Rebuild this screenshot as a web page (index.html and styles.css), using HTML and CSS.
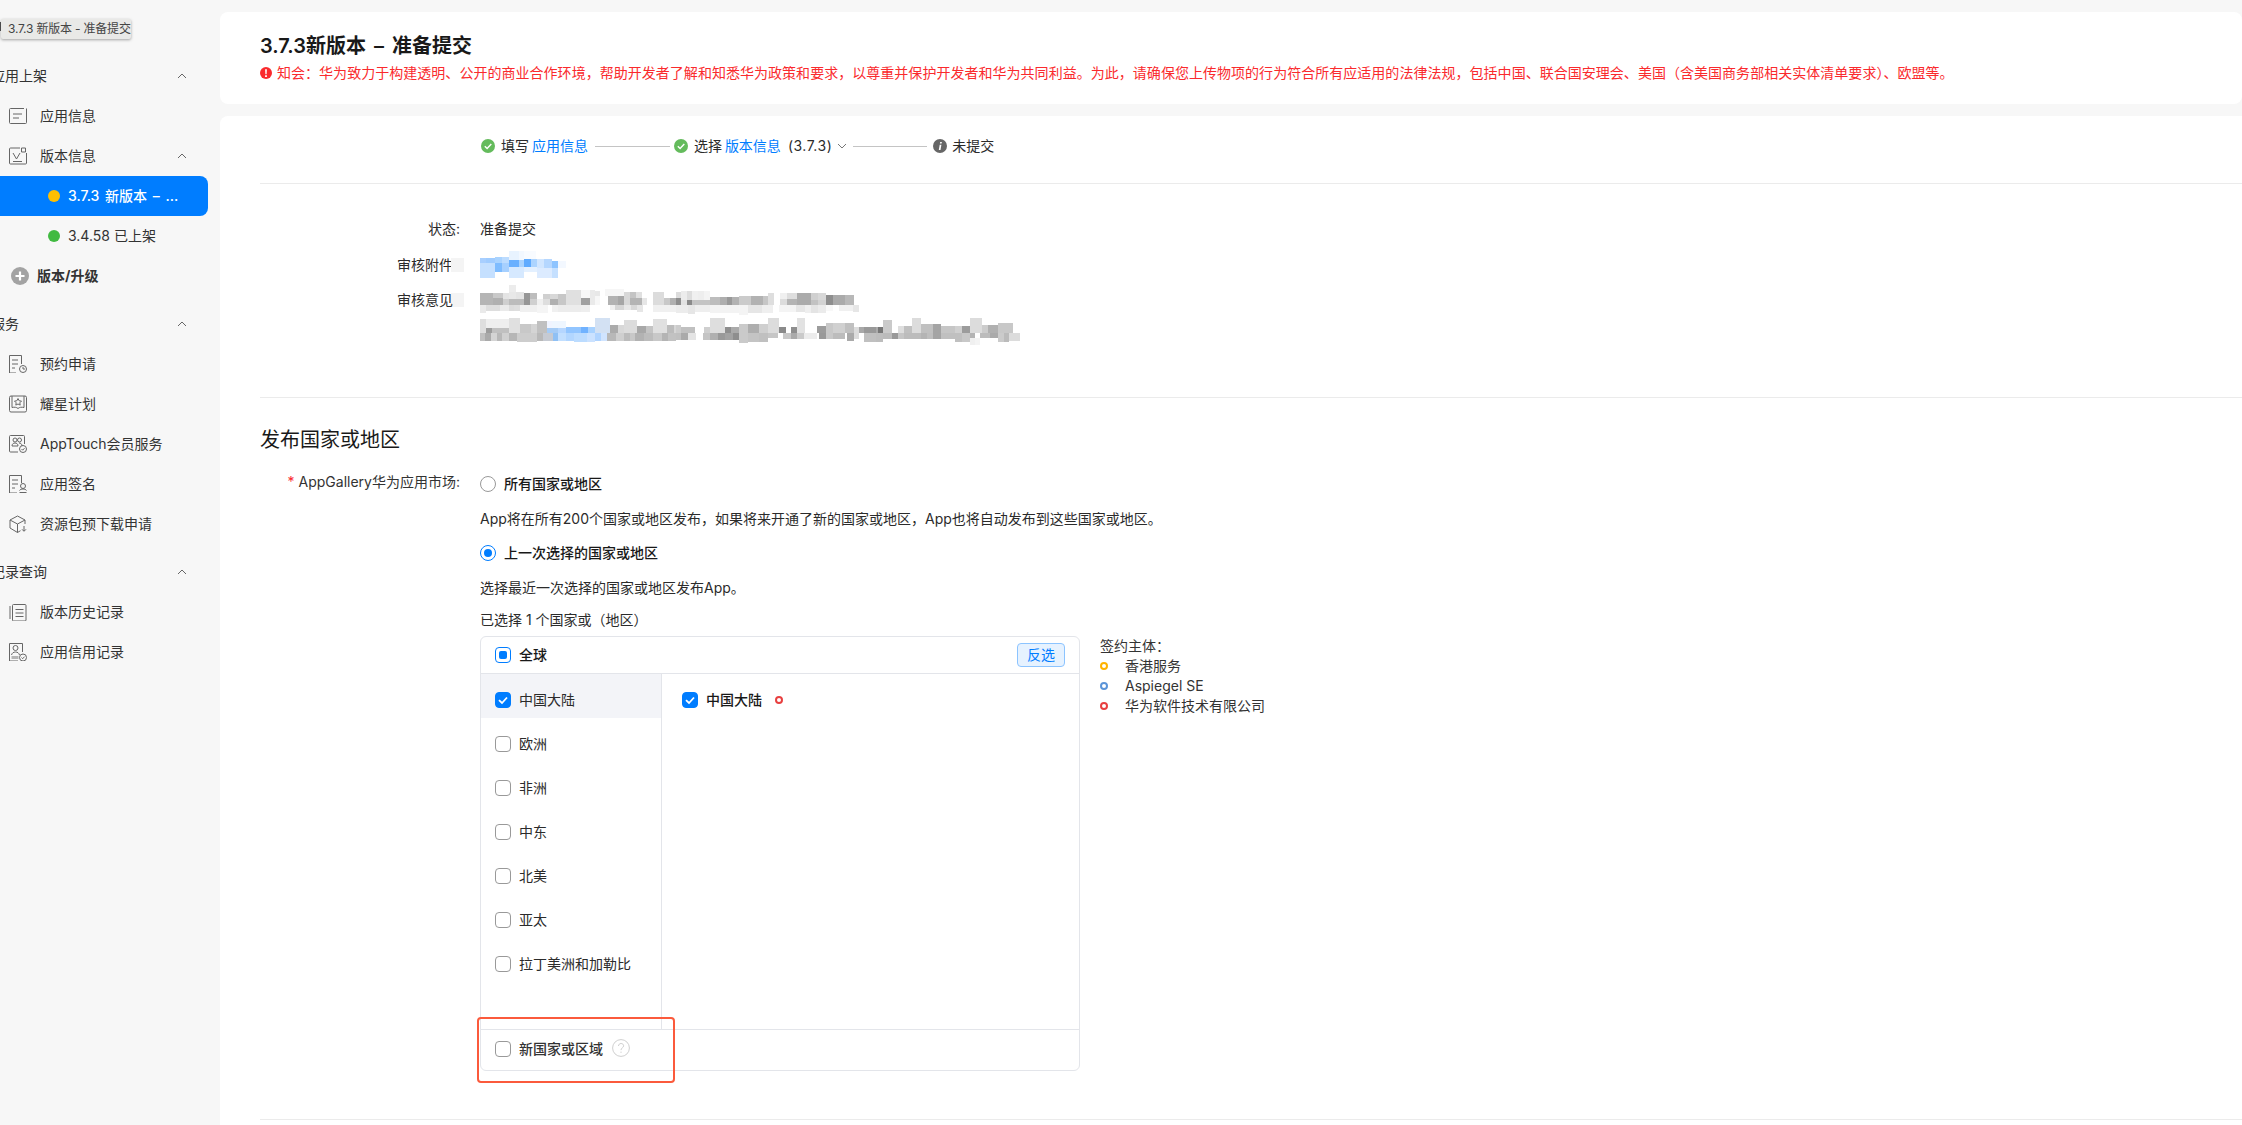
FILE: index.html
```html
<!DOCTYPE html>
<html lang="zh-CN">
<head>
<meta charset="utf-8">
<title>3.7.3新版本 – 准备提交</title>
<link rel="stylesheet" href="styles.css">
</head>
<body>
<aside class="sidebar">
  <div class="tip-mark"></div>
  <div class="tooltip">3.7.3 新版本 - 准备提交</div>
  <nav class="nav">
    <section class="nav-section">
      <div class="nav-head"><span>应用上架</span><svg class="chev" viewBox="0 0 10 6"><path d="M1 5l4-4 4 4"/></svg></div>
      <div class="nav-item"><svg class="ico" viewBox="0 0 18 18"><path d="M15 1.5H1.5a1 1 0 0 0-1 1v13a1 1 0 0 0 1 1h15a1 1 0 0 0 1-1V1.5"/><path d="M4 7h9M4 11h6"/></svg><span>应用信息</span></div>
      <div class="nav-item nav-parent"><svg class="ico" viewBox="0 0 18 18"><path d="M11 1H1.5a1 1 0 0 0-1 1v14a1 1 0 0 0 1 1h15a1 1 0 0 0 1-1V6"/><path d="M12.5 1h4v4h-4z"/><path d="M4 6l3.5 6L11 6M4 14.5h9"/></svg><span>版本信息</span><svg class="chev" viewBox="0 0 10 6"><path d="M1 5l4-4 4 4"/></svg></div>
      <div class="nav-sub nav-active"><i class="dot dot-amber"></i><span>3.7.3 新版本 – ...</span></div>
      <div class="nav-sub"><i class="dot dot-green"></i><span>3.4.58 已上架</span></div>
      <div class="nav-add"><svg class="plus" viewBox="0 0 18 18"><circle cx="9" cy="9" r="9"/><path d="M9 4.5v9M4.5 9h9"/></svg><span>版本/升级</span></div>
    </section>
    <section class="nav-section">
      <div class="nav-head"><span>服务</span><svg class="chev" viewBox="0 0 10 6"><path d="M1 5l4-4 4 4"/></svg></div>
      <div class="nav-item"><svg class="ico" viewBox="0 0 18 18"><path d="M7 18H.5V.5h12V9"/><path d="M3 5h6M3 9h6M3 13h3"/><circle cx="14" cy="14" r="3.5"/><path d="M14 12v2h2"/></svg><span>预约申请</span></div>
      <div class="nav-item"><svg class="ico" viewBox="0 0 18 18"><rect x=".5" y="1" width="17" height="16" rx="1.5"/><path d="M3 1v11.5c2.5-.6 4.500-.3 6 1 1.500-1.300 3.500-1.600 6-1V1"/><path d="M9 3.500l1.200 2.300 2.300.3-1.700 1.700.4 2.300L9 9l-2.200 1.100.4-2.300-1.700-1.700 2.300-.3z"/></svg><span>耀星计划</span></div>
      <div class="nav-item"><svg class="ico" viewBox="0 0 18 18"><path d="M9 17H1.500a1 1 0 0 1-1-1V1.500a1 1 0 0 1 1-1h13a1 1 0 0 1 1 1V9"/><circle cx="6" cy="5" r="2"/><circle cx="10.500" cy="5" r="2"/><path d="M3 11c0-2 1.300-3 3-3s3 1 3 3zM10 8c1.700 0 3 1 3 3"/><circle cx="14" cy="14" r="3.500"/><path d="M12.500 14l1.200 1.200 1.800-2"/></svg><span>AppTouch会员服务</span></div>
      <div class="nav-item"><svg class="ico" viewBox="0 0 18 18"><path d="M8 18H.5V.5h12V8"/><path d="M3 5h6M3 9h6M3 13h3"/><circle cx="14" cy="11" r="2.500"/><path d="M10.500 15.500c.5-1 2-1.500 3.500-1.500s3 .5 3.500 1.500M10.500 17.500h7"/></svg><span>应用签名</span></div>
      <div class="nav-item"><svg class="ico" viewBox="0 0 18 18"><path d="M8.500 1L1 5v8l7.500 4.500 3-1.800M8.500 1L16 5v4M1 5l7.500 4L16 5M8.500 9v8.500"/><path d="M15 11v5M13 14.300l2 2 2-2"/></svg><span>资源包预下载申请</span></div>
    </section>
    <section class="nav-section">
      <div class="nav-head"><span>记录查询</span><svg class="chev" viewBox="0 0 10 6"><path d="M1 5l4-4 4 4"/></svg></div>
      <div class="nav-item"><svg class="ico" viewBox="0 0 18 18"><path d="M1 3v13"/><path d="M3.500 2.500a1 1 0 0 1 1-1H16a1 1 0 0 1 1 1V17a1 1 0 0 1-1 1H4.500a1 1 0 0 1-1-1z"/><path d="M6.500 6.500h8M6.500 10h8M6.500 13.500h8"/></svg><span>版本历史记录</span></div>
      <div class="nav-item"><svg class="ico" viewBox="0 0 18 18"><path d="M9 18H.500V.500h13V9"/><circle cx="6.500" cy="5" r="2.500"/><path d="M2.500 12c.5-2 2-3 4-3s3.500 1 4 3"/><path class="ico-fill" d="M2.500 13h7v3h-7z"/><circle cx="14" cy="14.500" r="3.500"/><path d="M12.500 14.500l1.200 1.200 1.800-2"/></svg><span>应用信用记录</span></div>
    </section>
  </nav>
</aside>

<main class="main">
  <header class="card card-head">
    <h1 class="page-title">3.7.3新版本 – 准备提交</h1>
    <p class="notice"><svg class="notice-ico" viewBox="0 0 12 12"><circle cx="6" cy="6" r="6"/><path d="M5.100 2.200h1.800l-.3 5H5.400zM5.100 8.200h1.800V10H5.100z"/></svg><span>知会：华为致力于构建透明、公开的商业合作环境，帮助开发者了解和知悉华为政策和要求，以尊重并保护开发者和华为共同利益。为此，请确保您上传物项的行为符合所有应适用的法律法规，包括中国、联合国安理会、美国（含美国商务部相关实体清单要求）、欧盟等。</span></p>
  </header>

  <div class="card card-body">
    <div class="steps">
      <div class="step"><svg class="step-ico" viewBox="0 0 14 14"><circle class="ok" cx="7" cy="7" r="7"/><path class="tick" d="M3.800 7.200l2.300 2.300 4.200-4.500"/></svg><span class="step-text">填写 <a class="link">应用信息</a></span></div>
      <i class="step-line"></i>
      <div class="step"><svg class="step-ico" viewBox="0 0 14 14"><circle class="ok" cx="7" cy="7" r="7"/><path class="tick" d="M3.800 7.200l2.300 2.300 4.200-4.500"/></svg><span class="step-text">选择 <a class="link">版本信息</a></span><span class="step-ver">(3.7.3)</span><svg class="step-chev" viewBox="0 0 10 6"><path d="M1 1l4 4 4-4"/></svg></div>
      <i class="step-line step-line-b"></i>
      <div class="step step-last"><svg class="step-ico" viewBox="0 0 14 14"><circle class="pending" cx="7" cy="7" r="7"/><path class="info" d="M7.200 3h1.700l-.3 1.600H6.900zM6.700 5.800h1.700L7.500 11H5.800z"/></svg><span>未提交</span></div>
    </div>
    <hr class="rule rule-a">

    <div class="details">
      <div class="d-label">状态:</div>
      <div class="d-value">准备提交</div>
      <div class="d-label d-blur">审核附件</div>
      <svg class="mosaic" viewBox="12 0 1650 300" shape-rendering="crispEdges">
        <g fill="#f4f4f4"><rect x="-75" y="24" width="40" height="42"/><rect x="-75" y="130" width="40" height="42"/></g>
        <rect x="100" y="3" width="30" height="27" fill="#e8f3ff"/><rect x="130" y="3" width="15" height="27" fill="#f2f8ff"/><rect x="145" y="3" width="35" height="24" fill="#f8fbff"/>
        <rect x="12" y="24" width="18" height="16" fill="#a8cfff"/><rect x="30" y="24" width="27" height="16" fill="#a0ccff"/><rect x="57" y="21" width="21" height="18" fill="#a9d3ff"/><rect x="78" y="21" width="22" height="18" fill="#bcdcff"/><rect x="100" y="30" width="30" height="21" fill="#69b0ff"/><rect x="130" y="30" width="15" height="21" fill="#a9d3ff"/><rect x="145" y="27" width="20" height="24" fill="#5fabff"/><rect x="165" y="27" width="18" height="24" fill="#acd4ff"/><rect x="183" y="27" width="22" height="27" fill="#d1e6ff"/><rect x="205" y="27" width="23" height="27" fill="#b5d7ff"/><rect x="228" y="33" width="18" height="21" fill="#8ec4ff"/><rect x="246" y="33" width="24" height="21" fill="#f3f8ff"/>
        <rect x="12" y="39" width="45" height="45" fill="#c5e0ff"/><rect x="57" y="39" width="21" height="27" fill="#7ebcff"/><rect x="78" y="39" width="22" height="27" fill="#a6d0ff"/><rect x="100" y="51" width="45" height="33" fill="#d6e9ff"/><rect x="145" y="51" width="38" height="15" fill="#e3f0ff"/><rect x="183" y="54" width="45" height="30" fill="#dcebff"/><rect x="228" y="54" width="18" height="30" fill="#c5e0ff"/>

        <rect x="100" y="105" width="20" height="25" fill="#ececec"/>
        <rect x="12" y="129" width="38" height="36" fill="#b5b5b5"/><rect x="50" y="129" width="30" height="16" fill="#c9c9c9"/><rect x="50" y="145" width="30" height="20" fill="#b0b0b0"/><rect x="80" y="129" width="20" height="18" fill="#e4e4e4"/><rect x="80" y="147" width="20" height="18" fill="#cfcfcf"/><rect x="100" y="125" width="20" height="22" fill="#e8e8e8"/><rect x="100" y="147" width="43" height="18" fill="#bcbcbc"/><rect x="120" y="125" width="23" height="22" fill="#e4e4e4"/><rect x="143" y="129" width="19" height="36" fill="#969696"/><rect x="162" y="129" width="21" height="18" fill="#bdbdbd"/><rect x="162" y="147" width="21" height="18" fill="#d0d0d0"/><rect x="183" y="147" width="17" height="18" fill="#f0f0f0"/><rect x="200" y="132" width="22" height="15" fill="#d0d0d0"/><rect x="200" y="147" width="22" height="18" fill="#dedede"/><rect x="222" y="132" width="24" height="15" fill="#d8d8d8"/><rect x="222" y="147" width="24" height="18" fill="#b0b0b0"/><rect x="246" y="132" width="24" height="33" fill="#c7c7c7"/><rect x="270" y="120" width="45" height="45" fill="#e0e0e0"/><rect x="315" y="120" width="27" height="23" fill="#f8f8f8"/><rect x="315" y="143" width="27" height="22" fill="#a0a0a0"/><rect x="342" y="120" width="15" height="45" fill="#eaeaea"/><rect x="357" y="123" width="15" height="15" fill="#e8e8e8"/><rect x="357" y="138" width="15" height="27" fill="#f7f7f7"/><rect x="387" y="117" width="57" height="21" fill="#f6f6f6"/><rect x="396" y="138" width="30" height="27" fill="#b2b2b2"/><rect x="426" y="138" width="18" height="27" fill="#a6a6a6"/><rect x="444" y="126" width="18" height="39" fill="#d8d8d8"/><rect x="462" y="126" width="18" height="18" fill="#c4c4c4"/><rect x="462" y="144" width="36" height="21" fill="#b4b4b4"/><rect x="480" y="126" width="18" height="18" fill="#e0e0e0"/><rect x="498" y="144" width="15" height="21" fill="#e6e6e6"/><rect x="531" y="126" width="33" height="39" fill="#dcdcdc"/><rect x="564" y="144" width="18" height="21" fill="#c8c8c8"/><rect x="582" y="144" width="18" height="21" fill="#b0b0b0"/>
        <g transform="translate(0 165)"><rect x="12" width="18" height="25" fill="#eaeaea"/><rect x="30" width="42" height="17" fill="#dedede"/><rect x="72" width="28" height="17" fill="#eaeaea"/><rect x="100" width="14" height="17" fill="#dcdcdc"/><rect x="114" width="18" height="17" fill="#dedede"/><rect x="132" width="51" height="20" fill="#f0f0f0"/><rect x="183" width="32" height="25" fill="#f5f5f5"/><rect x="228" width="18" height="20" fill="#f0f0f0"/><rect x="246" width="69" height="20" fill="#ececec"/><rect x="315" width="27" height="22" fill="#eeeeee"/><rect x="402" width="15" height="15" fill="#f0f0f0"/><rect x="417" width="27" height="15" fill="#d6d6d6"/><rect x="444" width="21" height="15" fill="#e8e8e8"/><rect x="465" width="18" height="15" fill="#d8d8d8"/><rect x="483" width="18" height="22" fill="#e6e6e6"/><rect x="531" width="69" height="22" fill="#f0f0f0"/></g>

        <rect x="12" y="207" width="18" height="43" fill="#dedede"/><rect x="30" y="207" width="70" height="27" fill="#eeeeee"/><rect x="30" y="234" width="18" height="15" fill="#9c9c9c"/><rect x="48" y="234" width="52" height="15" fill="#c0c0c0"/><rect x="100" y="204" width="32" height="45" fill="#e0e0e0"/><rect x="132" y="222" width="33" height="27" fill="#c8c8c8"/><rect x="165" y="222" width="18" height="27" fill="#d4d4d4"/><rect x="183" y="213" width="30" height="36" fill="#c0c0c0"/><rect x="213" y="213" width="15" height="21" fill="#f0f4ff"/><rect x="228" y="213" width="42" height="21" fill="#eef6ff"/><rect x="213" y="234" width="33" height="15" fill="#a5cbf5"/><rect x="246" y="234" width="24" height="15" fill="#b5d6ff"/><rect x="270" y="231" width="45" height="18" fill="#92c5ff"/><rect x="315" y="231" width="21" height="18" fill="#70b2ff"/><rect x="336" y="231" width="21" height="18" fill="#a8d2ff"/><rect x="357" y="204" width="45" height="45" fill="#d3e1f3"/><rect x="402" y="225" width="24" height="24" fill="#ababab"/><rect x="426" y="225" width="18" height="24" fill="#d8d8d8"/><rect x="444" y="210" width="39" height="39" fill="#dcdcdc"/><rect x="483" y="228" width="27" height="21" fill="#a8a8a8"/><rect x="510" y="228" width="21" height="21" fill="#c4c4c4"/><rect x="531" y="207" width="42" height="42" fill="#e0e0e0"/><rect x="573" y="225" width="21" height="24" fill="#bcbcbc"/><rect x="594" y="225" width="6" height="24" fill="#d6d6d6"/>
        <g transform="translate(0 249)"><rect x="12" width="15" height="23" fill="#c0c0c0"/><rect x="27" width="18" height="23" fill="#aaaaaa"/><rect x="45" width="18" height="23" fill="#d4d4d4"/><rect x="63" width="15" height="23" fill="#b8b8b8"/><rect x="78" width="22" height="23" fill="#d0d0d0"/><rect x="100" width="23" height="23" fill="#b6b6b6"/><rect x="123" width="60" height="28" fill="#cdcdcd"/><rect x="183" width="18" height="23" fill="#b8b8b8"/><rect x="201" width="30" height="23" fill="#c6cad2"/><rect x="231" width="15" height="23" fill="#8fc0f4"/><rect x="246" width="24" height="23" fill="#c2dfff"/><rect x="270" width="24" height="25" fill="#b2d6ff"/><rect x="294" width="39" height="28" fill="#bcdcff"/><rect x="333" width="24" height="28" fill="#cbe2ff"/><rect x="357" width="18" height="23" fill="#b0d4ff"/><rect x="375" width="18" height="25" fill="#d0e4ff"/><rect x="393" width="27" height="23" fill="#b8b8b8"/><rect x="420" width="24" height="23" fill="#cfcfcf"/><rect x="444" width="18" height="23" fill="#bcbcbc"/><rect x="462" width="15" height="23" fill="#c8c8c8"/><rect x="477" width="27" height="23" fill="#b2b2b2"/><rect x="504" width="27" height="23" fill="#bcbcbc"/><rect x="531" width="27" height="23" fill="#c8c8c8"/><rect x="558" width="18" height="23" fill="#b4b4b4"/><rect x="576" width="24" height="23" fill="#c2c2c2"/></g>

        <g transform="translate(600 90)">
          <rect y="36" width="15" height="18" fill="#dcdcdc"/><rect y="54" width="15" height="21" fill="#8e8e8e"/><rect x="15" y="33" width="18" height="27" fill="#ececec"/><rect x="15" y="60" width="18" height="15" fill="#e2e2e2"/><rect x="33" y="33" width="15" height="27" fill="#dddddd"/><rect x="33" y="60" width="15" height="15" fill="#8a8a8a"/><rect x="48" y="33" width="18" height="27" fill="#f0f0f0"/><rect x="66" y="33" width="18" height="27" fill="#eeeeee"/><rect x="84" y="33" width="18" height="27" fill="#f4f4f4"/><rect x="48" y="60" width="54" height="15" fill="#c4c4c4"/><rect x="102" y="51" width="30" height="24" fill="#bdbdbd"/><rect x="132" y="51" width="21" height="24" fill="#aeaeae"/><rect x="153" y="51" width="15" height="24" fill="#999999"/><rect x="168" y="51" width="21" height="24" fill="#b2b2b2"/><rect x="189" y="48" width="36" height="27" fill="#cbcbcb"/><rect x="225" y="48" width="36" height="27" fill="#b2b2b2"/><rect x="261" y="48" width="15" height="27" fill="#c6c6c6"/><rect x="276" y="39" width="18" height="36" fill="#dedede"/><rect x="312" y="39" width="21" height="18" fill="#f0f0f0"/><rect x="312" y="57" width="21" height="18" fill="#dcdcdc"/><rect x="333" y="39" width="30" height="18" fill="#dedede"/><rect x="333" y="57" width="30" height="18" fill="#b4b4b4"/><rect x="363" y="39" width="42" height="36" fill="#ababab"/><rect x="405" y="39" width="21" height="21" fill="#d0d0d0"/><rect x="405" y="60" width="21" height="15" fill="#c2c2c2"/><rect x="426" y="39" width="24" height="21" fill="#d8d8d8"/><rect x="426" y="60" width="24" height="15" fill="#d2d2d2"/><rect x="450" y="45" width="21" height="30" fill="#8e8e8e"/><rect x="471" y="45" width="36" height="30" fill="#aaaaaa"/><rect x="507" y="45" width="27" height="30" fill="#b8b8b8"/>
          <g transform="translate(0 75)"><rect width="36" height="24" fill="#ececec"/><rect x="36" width="21" height="26" fill="#e6e6e6"/><rect x="57" width="45" height="20" fill="#eeeeee"/><rect x="102" width="87" height="24" fill="#f3f3f3"/><rect x="189" width="27" height="30" fill="#f4f4f4"/><rect x="216" width="42" height="24" fill="#e6e6e6"/><rect x="258" width="33" height="24" fill="#efefef"/><rect x="309" width="51" height="21" fill="#f4f4f4"/><rect x="360" width="27" height="21" fill="#e6e6e6"/><rect x="387" width="18" height="24" fill="#efefef"/><rect x="405" width="21" height="24" fill="#e4e4e4"/><rect x="426" width="24" height="24" fill="#ebebeb"/><rect x="450" width="21" height="18" fill="#f8f8f8"/><rect x="489" width="42" height="18" fill="#f0f0f0"/><rect x="531" width="18" height="21" fill="#e6e6e6"/></g>
          <rect x="15" y="141" width="42" height="18" fill="#c0c0c0"/><rect y="135" width="15" height="24" fill="#cccccc"/><rect y="159" width="15" height="21" fill="#c0c0c0"/><rect x="15" y="159" width="21" height="21" fill="#aaaaaa"/><rect x="36" y="159" width="24" height="21" fill="#e4e4e4"/><rect x="84" y="141" width="18" height="18" fill="#cfcfcf"/><rect x="81" y="159" width="21" height="21" fill="#c4c4c4"/><rect x="102" y="114" width="45" height="45" fill="#dedede"/><rect x="102" y="159" width="24" height="21" fill="#b0b0b0"/><rect x="126" y="159" width="21" height="21" fill="#999999"/><rect x="147" y="141" width="18" height="18" fill="#8e8e8e"/><rect x="147" y="159" width="24" height="21" fill="#a2a2a2"/><rect x="165" y="141" width="24" height="18" fill="#aaaaaa"/><rect x="171" y="159" width="18" height="21" fill="#8e8e8e"/><rect x="189" y="132" width="27" height="57" fill="#cacaca"/><rect x="216" y="132" width="33" height="27" fill="#aeaeae"/><rect x="216" y="159" width="33" height="27" fill="#c4c4c4"/><rect x="249" y="132" width="27" height="27" fill="#cfcfcf"/><rect x="249" y="159" width="27" height="27" fill="#c0c0c0"/><rect x="276" y="114" width="33" height="45" fill="#dcdcdc"/><rect x="276" y="159" width="30" height="15" fill="#c6c6c6"/><rect x="309" y="141" width="21" height="18" fill="#8a8a8a"/><rect x="321" y="159" width="24" height="18" fill="#c8c8c8"/><rect x="345" y="141" width="18" height="18" fill="#8e8e8e"/><rect x="345" y="159" width="18" height="18" fill="#aaaaaa"/><rect x="363" y="114" width="24" height="45" fill="#e2e2e2"/><rect x="363" y="159" width="21" height="18" fill="#cacaca"/><rect x="384" y="159" width="39" height="18" fill="#ececec"/><rect x="423" y="138" width="27" height="21" fill="#9c9c9c"/><rect x="429" y="159" width="21" height="18" fill="#999999"/><rect x="450" y="129" width="21" height="48" fill="#c8c8c8"/><rect x="471" y="129" width="36" height="30" fill="#d0d0d0"/><rect x="471" y="159" width="36" height="18" fill="#bcbcbc"/><rect x="507" y="129" width="27" height="30" fill="#c0c0c0"/><rect x="513" y="159" width="21" height="24" fill="#aaaaaa"/><rect x="534" y="141" width="15" height="36" fill="#dcdcdc"/><rect x="549" y="141" width="15" height="18" fill="#a8a8a8"/><rect x="564" y="141" width="36" height="18" fill="#999999"/><rect x="564" y="159" width="36" height="27" fill="#c0c0c0"/>
        </g>
        <g transform="translate(1200 90)">
          <rect y="141" width="6" height="18" fill="#aaaaaa"/><rect x="6" y="141" width="15" height="18" fill="#777777"/><rect y="159" width="21" height="27" fill="#bdbdbd"/><rect x="21" y="120" width="27" height="39" fill="#cacaca"/><rect x="21" y="159" width="27" height="18" fill="#bbbbbb"/><rect x="48" y="159" width="18" height="18" fill="#999999"/><rect x="66" y="138" width="18" height="21" fill="#dedede"/><rect x="66" y="159" width="18" height="18" fill="#c6c6c6"/><rect x="84" y="138" width="24" height="21" fill="#c0c0c0"/><rect x="84" y="159" width="24" height="18" fill="#bcbcbc"/><rect x="108" y="114" width="27" height="45" fill="#dcdcdc"/><rect x="108" y="159" width="27" height="18" fill="#bcbcbc"/><rect x="135" y="132" width="36" height="27" fill="#c0c0c0"/><rect x="135" y="159" width="18" height="18" fill="#b4b4b4"/><rect x="153" y="159" width="18" height="18" fill="#bebebe"/><rect x="171" y="132" width="24" height="45" fill="#a4a4a4"/><rect x="195" y="138" width="42" height="21" fill="#c6c6c6"/><rect x="195" y="159" width="42" height="18" fill="#c0c0c0"/><rect x="237" y="138" width="21" height="21" fill="#d0d0d0"/><rect x="237" y="159" width="21" height="27" fill="#c0c0c0"/><rect x="258" y="138" width="24" height="21" fill="#9c9c9c"/><rect x="258" y="159" width="24" height="27" fill="#c8c8c8"/><rect x="282" y="114" width="36" height="45" fill="#dcdcdc"/><rect x="282" y="159" width="15" height="15" fill="#b4b4b4"/><rect x="282" y="174" width="15" height="21" fill="#f0f0f0"/><rect x="297" y="174" width="15" height="21" fill="#f4f4f4"/><rect x="318" y="135" width="18" height="24" fill="#cccccc"/><rect x="312" y="159" width="30" height="15" fill="#bcbcbc"/><rect x="336" y="135" width="30" height="24" fill="#b0b0b0"/><rect x="342" y="159" width="24" height="15" fill="#aaaaaa"/><rect x="366" y="129" width="45" height="30" fill="#c8c8c8"/><rect x="366" y="159" width="18" height="27" fill="#cbcbcb"/><rect x="384" y="159" width="15" height="27" fill="#bbbbbb"/><rect x="399" y="159" width="33" height="24" fill="#dcdcdc"/>
        </g>
      </svg>
      <div class="d-label d-blur">审核意见</div>
    </div>
    <hr class="rule">

    <h2 class="section-title">发布国家或地区</h2>
    <div class="form-row">
      <label class="f-label"><em>*</em> AppGallery华为应用市场:</label>
      <div class="f-body">
        <div class="radio-row"><i class="radio"></i><span>所有国家或地区</span></div>
        <p class="f-desc">App将在所有200个国家或地区发布，如果将来开通了新的国家或地区，App也将自动发布到这些国家或地区。</p>
        <div class="radio-row radio-row-b"><i class="radio radio-on"></i><span>上一次选择的国家或地区</span></div>
        <p class="f-desc">选择最近一次选择的国家或地区发布App。</p>
        <p class="f-count">已选择 1 个国家或（地区）</p>
        <div class="picker-wrap">
          <div class="picker">
            <div class="picker-head">
              <i class="cb cb-part"></i><span>全球</span>
              <button class="invert" type="button">反选</button>
            </div>
            <div class="picker-main">
              <div class="regions">
                <div class="region region-on"><i class="cb cb-on"><svg viewBox="0 0 16 16"><path d="M4 8.200l3 2.800 5-5.500"/></svg></i><span>中国大陆</span></div>
                <div class="region"><i class="cb"></i><span>欧洲</span></div>
                <div class="region"><i class="cb"></i><span>非洲</span></div>
                <div class="region"><i class="cb"></i><span>中东</span></div>
                <div class="region"><i class="cb"></i><span>北美</span></div>
                <div class="region"><i class="cb"></i><span>亚太</span></div>
                <div class="region"><i class="cb"></i><span>拉丁美洲和加勒比</span></div>
              </div>
              <div class="countries">
                <div class="region country"><i class="cb cb-on"><svg viewBox="0 0 16 16"><path d="M4 8.200l3 2.800 5-5.500"/></svg></i><span>中国大陆</span><i class="ring ring-red"></i></div>
              </div>
            </div>
            <div class="picker-foot"><i class="cb"></i><span>新国家或区域</span><svg class="help" viewBox="0 0 18 18"><circle cx="9" cy="9" r="8.400"/><path d="M6.500 7c0-1.500 1.100-2.500 2.600-2.500S11.600 5.500 11.600 6.800c0 1.900-2.600 2.100-2.600 4.300"/><path d="M9 12.600v1.300"/></svg></div>
            <div class="callout"></div>
          </div>
          <div class="legend">
            <div>签约主体：</div>
            <div class="legend-row"><i class="ring ring-amber"></i>香港服务</div>
            <div class="legend-row"><i class="ring ring-blue"></i>Aspiegel SE</div>
            <div class="legend-row"><i class="ring ring-red"></i>华为软件技术有限公司</div>
          </div>
        </div>
      </div>
    </div>
    <hr class="rule rule-end">
  </div>
</main>
</body>
</html>
```

FILE: styles.css
```css
* { box-sizing: border-box; }
html, body { height: 100%; }
body {
  margin: 0;
  display: flex;
  overflow: hidden;
  background: #f7f7f7;
  color: #2b2b2b;
  font: 14px/20px Inter, "Noto Sans CJK SC", sans-serif;
}
p, h1, h2 { margin: 0; }
i { display: block; font-style: normal; }

/* sidebar */
.sidebar { position: relative; flex: 0 0 220px; overflow: hidden; padding-top: 56px; }
.tooltip {
  position: absolute; left: 1px; top: 19px; width: 130px; height: 20px;
  padding-left: 7px; font-size: 12px; line-height: 20px; color: #444; white-space: nowrap; letter-spacing: -.2px;
  background: #e9e9e7; border-radius: 2px; box-shadow: 0 1px 3px rgba(0,0,0,.35);
}
.tip-mark { position: absolute; left: 0; top: 22px; width: 2px; height: 9px; background: #555; }
.nav-section { margin-bottom: 8px; }
.nav-head, .nav-item, .nav-sub, .nav-add { display: flex; align-items: center; height: 40px; white-space: nowrap; color: #333; }
.nav-head { margin-left: -9px; width: 229px; padding-right: 33px; justify-content: space-between; }
.nav-item { width: 208px; padding-left: 9px; gap: 13px; }
.nav-parent { position: relative; }
.nav-parent .chev { position: absolute; left: 177px; top: 17px; }
.chev { width: 10px; height: 6px; fill: none; stroke: #666; stroke-width: 1; flex: none; }
.ico { width: 18px; height: 18px; flex: none; fill: none; stroke: #666; stroke-width: 1; }
.ico-fill { fill: #b5b5b5; stroke: none; }
.nav-sub { width: 208px; padding-left: 48px; gap: 8px; }
.nav-active { background: #007dff; color: #fff; border-radius: 0 8px 8px 0; font-weight: 500; word-spacing: 2px; }
.dot { width: 12px; height: 12px; border-radius: 50%; }
.dot-amber { background: #ffbf00; }
.dot-green { background: #41ba41; }
.nav-add { padding-left: 11px; gap: 8px; font-weight: 700; }
.plus { width: 18px; height: 18px; fill: #a3a3a3; stroke: #fff; stroke-width: 2.200; }
.plus circle { stroke: none; }

/* main */
.main { flex: 1; min-width: 0; display: flex; flex-direction: column; padding-top: 12px; gap: 12px; }
.card { background: #fff; padding-left: 40px; border-radius: 8px 0 0 0; }
.card-head { height: 92px; padding-top: 22px; border-radius: 8px; }
.card-body { flex: 1; padding-top: 20px; }
.page-title { font-size: 20px; line-height: 24px; font-weight: 600; word-spacing: 3px; color: #191919; }
.notice { display: flex; align-items: center; gap: 5px; margin-top: 5px; color: #fa2a2d; white-space: nowrap; letter-spacing: .03px; }
.notice-ico { width: 12px; height: 12px; fill: #fa2a2d; flex: none; }
.notice-ico path { fill: #fff; }

.steps { display: flex; align-items: center; height: 20px; margin-left: 221px; white-space: nowrap; }
.step { display: flex; align-items: center; gap: 6px; }
.step-text { word-spacing: -1px; }
.step-ico { width: 14px; height: 14px; flex: none; }
.ok { fill: #64bb5c; }
.tick { fill: none; stroke: #fff; stroke-width: 1.400; }
.pending { fill: #666; }
.info { fill: #fff; }
.link { color: #007dff; }
.step-ver { margin-left: 1px; letter-spacing: .5px; }
.step-chev { width: 10px; height: 6px; margin-left: -1px; fill: none; stroke: #777; stroke-width: 1; }
.step-line { width: 75px; height: 1px; margin: 0 4px 0 7px; background: #c4c4c4; }
.step-line-b { margin: 0 6px 0 6px; width: 74px; }
.step-last { gap: 5px; }

.rule { height: 1px; margin: 0; border: 0; background: #ebebeb; }
.rule-a { margin-top: 27px; }

.details {
  display: grid; grid-template-columns: 200px 1fr; grid-template-rows: 31px 40px 1fr;
  column-gap: 20px; height: 178px; margin-top: 35px;
}
.d-label { text-align: right; }
.d-blur { padding-right: 7px; grid-column: 1; }
.details .d-blur:nth-of-type(3) { padding-top: 5px; }
.mosaic { grid-column: 2; grid-row: 2 / span 2; width: 550px; height: 100px; overflow: visible; }

.section-title { margin-top: 28px; font-size: 20px; line-height: 28px; font-weight: 400; color: #191919; }
.form-row { display: flex; gap: 20px; margin-top: 18px; }
.f-label { flex: 0 0 200px; text-align: right; color: #333; }
.f-label em { font-style: normal; color: #fa2a2d; }
.f-body { flex: 1; }
.radio-row { display: flex; align-items: center; gap: 8px; height: 24px; font-weight: 500; color: #191919; }
.radio-row-b { margin-top: 12px; }
.radio { width: 16px; height: 16px; border: 1px solid #999; border-radius: 50%; }
.radio-on { border-color: #007dff; position: relative; }
.radio-on::after { content: ""; position: absolute; left: 3px; top: 3px; width: 8px; height: 8px; border-radius: 50%; background: #007dff; }
.f-desc { margin-top: 13px; }
.f-count { margin-top: 12px; }

.picker-wrap { display: flex; gap: 20px; margin-top: 6px; }
.picker { position: relative; width: 600px; height: 435px; display: flex; flex-direction: column; border: 1px solid #e3e5ea; border-radius: 6px; }
.picker-head { display: flex; align-items: center; gap: 8px; height: 37px; padding: 0 14px; border-bottom: 1px solid #e3e5ea; font-weight: 500; color: #191919; flex: none; }
.invert { margin-left: auto; width: 48px; height: 24px; padding: 0; font: inherit; font-weight: 400; line-height: 20px; color: #007dff; background: #e6f2ff; border: 1px solid #8cc4ff; border-radius: 4px; }
.picker-main { flex: 1; display: flex; min-height: 0; }
.regions { width: 181px; border-right: 1px solid #e3e5ea; }
.countries { flex: 1; }
.region { display: flex; align-items: center; gap: 8px; height: 44px; padding: 8px 0 0 14px; }
.region-on { background: #f3f4f8; }
.country { padding-left: 20px; font-weight: 500; color: #191919; }
.country .ring { margin-left: 5px; }
.cb { position: relative; width: 16px; height: 16px; flex: none; border: 1px solid #999; border-radius: 4px; background: #fff; }
.cb svg { position: absolute; left: -1px; top: -1px; width: 16px; height: 16px; fill: none; stroke: #fff; stroke-width: 1.800; }
.cb-on { background: #007dff; border-color: #007dff; }
.cb-part { border-color: #007dff; }
.cb-part::after { content: ""; position: absolute; left: 3px; top: 3px; width: 8px; height: 8px; border-radius: 2px; background: #007dff; }
.picker-foot { display: flex; align-items: center; gap: 8px; height: 41px; flex: none; padding: 0 14px 2px; border-top: 1px solid #e3e5ea; font-weight: 500; color: #333; }
.help { width: 18px; height: 18px; margin: -2px 0 0 1px; fill: none; stroke: #cfcfcf; stroke-width: 1; }
.callout { position: absolute; left: -4px; top: 380px; width: 198px; height: 66px; border: 2px solid #fb5a3c; border-radius: 4px; }
.legend { line-height: 20px; color: #333; }
.legend-row { display: flex; align-items: center; }
.ring { width: 8px; height: 8px; border-radius: 50%; border: 2px solid; margin-right: 17px; flex: none; }
.ring-amber { border-color: #ffb300; }
.ring-blue { border-color: #5b94d8; }
.ring-red { border-color: #e84040; }
.rule-end { margin-top: 48px; }
```
